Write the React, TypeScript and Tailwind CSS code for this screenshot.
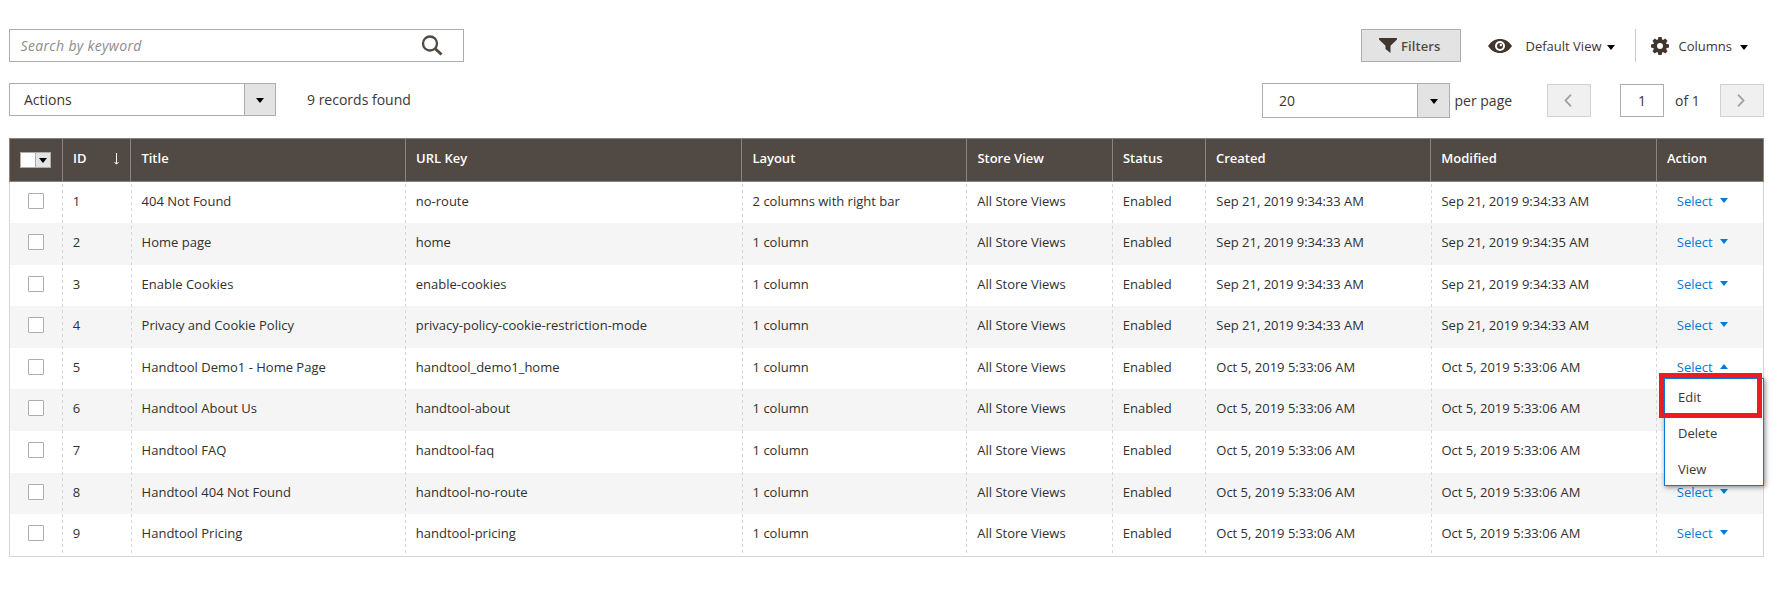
import clsx from 'clsx';

const COLUMNS = ['ID', 'Title', 'URL Key', 'Layout', 'Store View', 'Status', 'Created', 'Modified', 'Action'];

const SEP = 'Sep 21, 2019 9:34:33 AM';
const OCT = 'Oct 5, 2019 5:33:06 AM';

const PAGES = [
  { id: 1, title: '404 Not Found', key: 'no-route', layout: '2 columns with right bar', created: SEP, modified: SEP },
  { id: 2, title: 'Home page', key: 'home', layout: '1 column', created: SEP, modified: 'Sep 21, 2019 9:34:35 AM' },
  { id: 3, title: 'Enable Cookies', key: 'enable-cookies', layout: '1 column', created: SEP, modified: SEP },
  { id: 4, title: 'Privacy and Cookie Policy', key: 'privacy-policy-cookie-restriction-mode', layout: '1 column', created: SEP, modified: SEP },
  { id: 5, title: 'Handtool Demo1 - Home Page', key: 'handtool_demo1_home', layout: '1 column', created: OCT, modified: OCT },
  { id: 6, title: 'Handtool About Us', key: 'handtool-about', layout: '1 column', created: OCT, modified: OCT },
  { id: 7, title: 'Handtool FAQ', key: 'handtool-faq', layout: '1 column', created: OCT, modified: OCT },
  { id: 8, title: 'Handtool 404 Not Found', key: 'handtool-no-route', layout: '1 column', created: OCT, modified: OCT },
  { id: 9, title: 'Handtool Pricing', key: 'handtool-pricing', layout: '1 column', created: OCT, modified: OCT },
];

const OPEN_ROW = 5;

const HEAD_GRID = 'grid grid-cols-[53px_68.4px_274.6px_336.4px_225px_145.6px_93px_225.4px_225.6px_108px]';
const BODY_GRID = 'grid grid-cols-[52px_68.8px_274.2px_336.8px_224.7px_145.5px_93.5px_225.2px_225.3px_107px]';

function Caret({ className, up = false }: { className?: string; up?: boolean }) {
  return (
    <svg className={clsx('shrink-0', className)} width="8" height="5" viewBox="0 0 8 5" fill="currentColor">
      <path d={up ? 'M0 5h8L4 0z' : 'M0 0h8L4 5z'} />
    </svg>
  );
}

function Toolbar() {
  return (
    <div className="flex h-[33px] items-stretch">
      <div className="flex w-[455px] items-center justify-between border border-[#adadad] pr-[20px] pl-[10.5px]">
        <span className="text-sm tracking-[0.34px] text-[#8c8c8c] italic">Search by keyword</span>
        <svg width="22" height="21" viewBox="0 0 22 21" fill="none" stroke="#514943">
          <circle cx="9" cy="8.5" r="7" strokeWidth="2.3" />
          <path d="M14 13.5l6.5 6" strokeWidth="3" />
        </svg>
      </div>
      <button className="ml-auto flex w-[100px] items-center border border-[#adadad] bg-[#e3e3e3] pl-[17px] text-[13px] font-semibold text-[#514943]">
        <svg className="mr-[4px]" width="18" height="15" viewBox="0 0 18 15" fill="#41362f">
          <path d="M0 0h18v1.5l-6.5 6.300V15L6.500 11V7.800L0 1.500z" />
        </svg>
        <span className="pt-[2px] tracking-[0.1px]">Filters</span>
      </button>
      <div className="flex items-center pl-[27px]">
        <svg width="24" height="14" viewBox="0 0 24 14" fill="#41362f">
          <path d="M0 7C3 2.500 7 0 12 0s9 2.500 12 7c-3 4.500-7 7-12 7S3 11.500 0 7z" />
          <circle cx="12" cy="7" r="5" fill="#fff" />
          <circle cx="12" cy="7" r="3" />
          <circle cx="12.800" cy="6" r="1.200" fill="#fff" />
        </svg>
        <span className="ml-[13.5px] w-[81.5px] pt-[2px] text-[13px]">Default View</span>
        <Caret className="mt-[3px] text-black" />
      </div>
      <div className="ml-[20px] flex w-[129px] items-center border-l border-[#ccc] pl-[15px]">
        <svg width="18" height="18" viewBox="-9 -9 18 18" fill="#41362f">
          {[0, 45, 90, 135].map((angle) => (
            <path key={angle} d="M-2.300 -6L-1.600 -9H1.600L2.300 -6V6L1.600 9H-1.600L-2.300 6z" transform={`rotate(${angle})`} />
          ))}
          <circle r="6.700" />
          <circle r="3" fill="#fff" />
        </svg>
        <span className="ml-[9.5px] w-[61.5px] pt-[2px] text-[13px]">Columns</span>
        <Caret className="mt-[3px] text-black" />
      </div>
    </div>
  );
}

function SelectBox({ label, className, arrowClassName }: { label: string; className: string; arrowClassName: string }) {
  return (
    <div className={clsx('flex border border-[#adadad] text-sm', className)}>
      <span className="flex flex-1 items-center">{label}</span>
      <span className={clsx('flex items-center justify-center border-l border-[#adadad] bg-[#e3e3e3] pt-px text-black', arrowClassName)}>
        <Caret />
      </span>
    </div>
  );
}

function PagerButton({ path }: { path: string }) {
  return (
    <button className="flex h-[33px] w-[44px] items-center justify-center border border-[#d1d1d1] bg-[#f0f0f0] pr-[2px] pb-px">
      <svg width="8" height="13" viewBox="0 0 8 13" fill="none" stroke="#a39e9b" strokeWidth="1.8">
        <path d={path} />
      </svg>
    </button>
  );
}

function Controls() {
  return (
    <div className="mt-[21px] flex h-[35px] items-start text-sm">
      <SelectBox label="Actions" className="h-[33px] w-[267px] pl-[14px]" arrowClassName="w-[31px]" />
      <span className="ml-[31px] leading-[33px]">9 records found</span>
      <SelectBox label="20" className="ml-auto h-[35px] w-[188px] pl-[16px]" arrowClassName="w-[32px]" />
      <span className="ml-[4.5px] w-[92.5px] leading-[35px]">per page</span>
      <div className="mt-px flex">
        <PagerButton path="M7 .7L1.500 6.500 7 12.300" />
        <span className="ml-[29px] flex h-[33px] w-[44px] items-center justify-center border border-[#adadad]">1</span>
        <span className="ml-[11px] w-[45px] leading-[33px]">of 1</span>
        <PagerButton path="M1 .7l5.500 5.800L1 12.300" />
      </div>
    </div>
  );
}

function ActionMenu() {
  return (
    <div className="absolute top-[30px] left-[8px] z-10 h-[108px] w-[100px] border border-[#007bdb] bg-white pl-[13px] text-[#41362f] shadow-[1px_1px_5px_rgba(0,0,0,0.5)]">
      <div className="h-[36px] leading-[36px]">Edit</div>
      <div className="h-[36px] leading-[36px]">Delete</div>
      <div className="h-[34px] leading-[36px]">View</div>
      {/* Highlight frame around the Edit item */}
      <div className="absolute -top-[6px] -left-[6px] h-[45px] w-[103px] border-5 border-[#ed1c24]" />
    </div>
  );
}

function Grid() {
  return (
    <div className="mt-[20px] w-[1755px] text-[13px] text-[#303030]">
      <div className={clsx(HEAD_GRID, 'h-[44px] border-y border-r border-[#8a837f] bg-[#514943] font-semibold text-white')}>
        <div className="flex items-center border-l border-[#8a837f] pl-[10px]">
          <div className="flex h-[16px] w-[31px] border border-[#adadad] bg-white">
            <span className="ml-auto flex w-[15px] items-center justify-center border-l border-[#adadad] bg-[#e3e3e3] text-black">
              <Caret />
            </span>
          </div>
        </div>
        {COLUMNS.map((column) => (
          <div key={column} className="flex items-center border-l border-[#8a837f] pr-[11px] pb-[2px] pl-[10px]">
            {column}
            {column === 'ID' && (
              <svg className="ml-auto" width="5" height="12" viewBox="0 0 5 12" fill="none" stroke="#fff">
                <path d="M2.500 0v11M.5 9l2 2.200L4.500 9" />
              </svg>
            )}
          </div>
        ))}
      </div>
      <div className="relative -mt-[0.1875px] h-[375.1875px] border-x border-b border-[#d6d6d6]">
        {PAGES.map((page) => (
          <div
            key={page.id}
            className={clsx(
              BODY_GRID,
              'h-[41.53125px] leading-[39px] whitespace-nowrap *:pl-[10.8px]',
              page.id % 2 === 0 && 'bg-[#f5f5f5]'
            )}
          >
            <div className="pt-[11px]">
              <span className="ml-[7px] block size-[16px] rounded-[1px] border border-[#adadad] bg-white" />
            </div>
            <div>{page.id}</div>
            <div>{page.title}</div>
            <div>{page.key}</div>
            <div>{page.layout}</div>
            <div>All Store Views</div>
            <div>Enabled</div>
            <div>{page.created}</div>
            <div>{page.modified}</div>
            <div className="relative">
              <div className="flex items-center pl-[10px] text-[#007bdb]">
                <span className="w-[43px]">Select</span>
                <Caret up={page.id === OPEN_ROW} className="mb-[2px]" />
              </div>
              {page.id === OPEN_ROW && <ActionMenu />}
            </div>
          </div>
        ))}
        {/* Dashed column separators run across all rows */}
        <div className={clsx(BODY_GRID, 'pointer-events-none absolute inset-0')}>
          <span />
          {COLUMNS.map((column) => (
            <span
              key={column}
              className="bg-[repeating-linear-gradient(to_bottom,transparent_0_2px,#d6d6d6_2px_5px,transparent_5px_6px)] bg-[length:1px_100%] bg-no-repeat"
            />
          ))}
        </div>
      </div>
    </div>
  );
}

export default function App() {
  return (
    <div className="h-[589px] w-[1781px] bg-white pt-[29px] pl-[9px] font-['Open_Sans','Noto_Sans',sans-serif] text-[#41362f]">
      <div className="w-[1755px]">
        <Toolbar />
        <Controls />
        <Grid />
      </div>
    </div>
  );
}
